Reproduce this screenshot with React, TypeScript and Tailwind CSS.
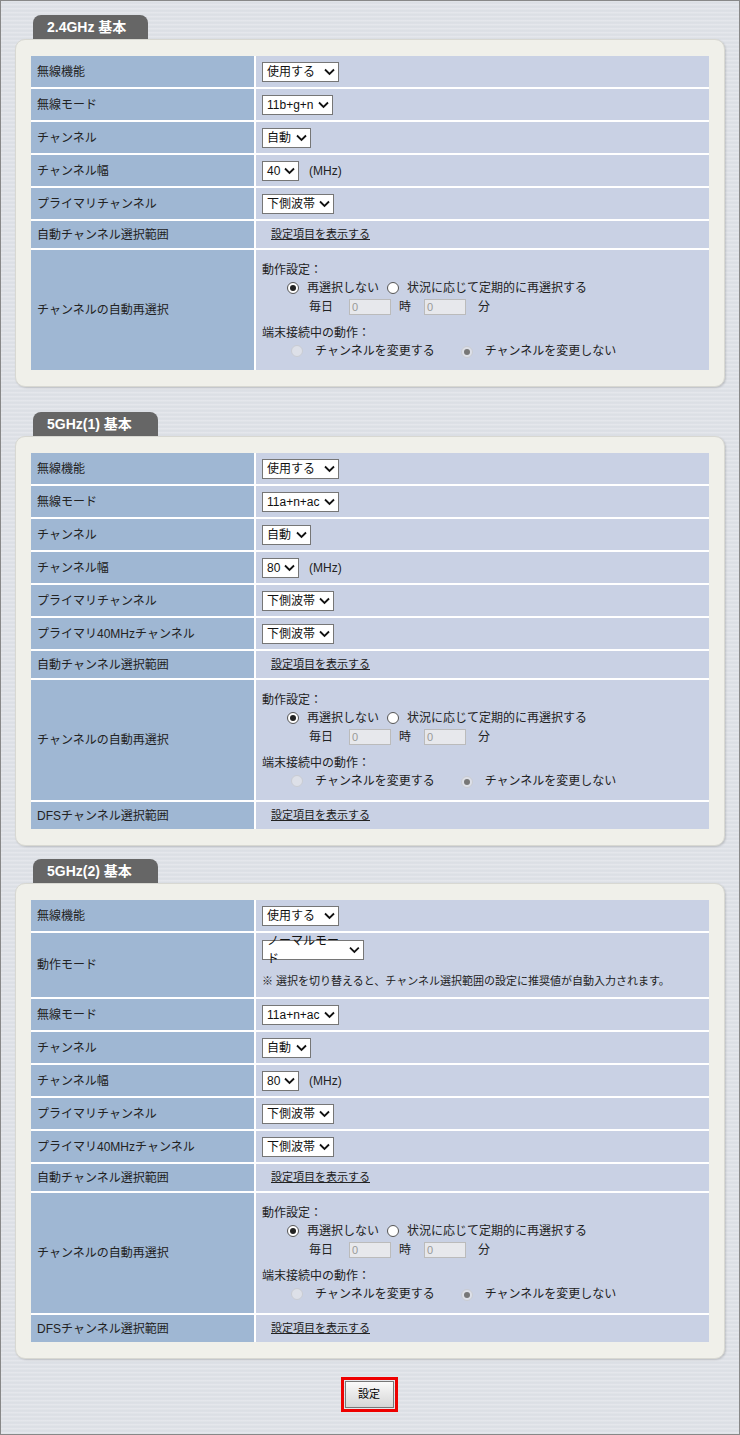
import React from "react";

const F = { fontFamily: '"Liberation Sans","Noto Sans CJK JP",sans-serif' };

function Sel({ v, w }: { v: string; w: number }) {
  return (
    <div className="inline-flex items-center justify-between h-[20px] bg-white border border-[#767676] pl-[4px] pr-[3px] text-[12px] text-[#111]" style={{ width: w }}>
      <span>{v}</span>
      <svg width="11" height="8" viewBox="0 0 11 8"><path d="M1 1.5 L5.5 6 L10 1.5" stroke="#111" strokeWidth="1.8" fill="none" /></svg>
    </div>
  );
}

function Radio({ on, dis }: { on?: boolean; dis?: boolean }) {
  return (
    <span className={`inline-flex items-center justify-center w-[12px] h-[12px] rounded-full border ${dis ? "border-[#c9ccd3] bg-[#dde0e8]" : "border-[#555] bg-white"}`}>
      {on && <span className={`w-[6px] h-[6px] rounded-full ${dis ? "bg-[#777]" : "bg-[#222]"}`} />}
    </span>
  );
}

function Row({ label, h = 31, children }: { label: string; h?: number; children: React.ReactNode }) {
  return (
    <div className="grid grid-cols-[223px_1fr] gap-[2px]" style={{ minHeight: h }}>
      <div className="bg-[#9fb7d3] flex items-center pl-[6px] text-[12px] text-[#222]">{label}</div>
      <div className="bg-[#c9d1e4] flex items-center pl-[6px] text-[12px] text-[#222]">{children}</div>
    </div>
  );
}

const Link = () => <span className="underline ml-[9px] text-[11px]">設定項目を表示する</span>;

function Reselect() {
  return (
    <Row label="チャンネルの自動再選択" h={120}>
      <div className="flex flex-col py-[5px] leading-[18px] text-[12px]">
        <div>動作設定：</div>
        <div className="flex items-center gap-[8px] pl-[25px]">
          <Radio on /> <span>再選択しない</span>
          <Radio /> <span>状況に応じて定期的に再選択する</span>
        </div>
        <div className="flex items-center pl-[47px] h-[20px]">
          <span>毎日</span>
          <div className="ml-[16px] w-[42px] h-[16px] border border-[#bbb] bg-[#e7e8ec] text-[#999] text-[11px] leading-[14px] pl-[2px]">0</div>
          <span className="ml-[8px]">時</span>
          <div className="ml-[13px] w-[42px] h-[16px] border border-[#bbb] bg-[#e7e8ec] text-[#999] text-[11px] leading-[14px] pl-[2px]">0</div>
          <span className="ml-[12px]">分</span>
        </div>
        <div className="mt-[7px]">端末接続中の動作：</div>
        <div className="flex items-center pl-[29px]">
          <Radio dis /> <span className="ml-[12px]">チャンネルを変更する</span>
          <span className="ml-[26px]"><Radio dis on /></span> <span className="ml-[12px]">チャンネルを変更しない</span>
        </div>
      </div>
    </Row>
  );
}

function Section({ title, tabW, children }: { title: string; tabW: number; children: React.ReactNode }) {
  return (
    <div className="mt-[13px]">
      <div className="ml-[18px] h-[24px] bg-[#666] rounded-t-[8px] text-white font-bold text-[14px] flex items-center pl-[14px]" style={{ width: tabW }}>{title}</div>
      <div className="bg-[#f0f0ea] rounded-[10px] border border-[#d8d8d2] px-[15px] py-[16px] shadow-[1px_1px_2px_rgba(0,0,0,0.15)]">
        <div className="flex flex-col gap-[2px] bg-white">{children}</div>
      </div>
    </div>
  );
}

const MHz = (v: string) => (<><Sel v={v} w={37} /><span className="ml-[10px]">(MHz)</span></>);

export default function App() {
  return (
    <div style={F} className="w-[740px] h-[1435px] border border-[#888] bg-[repeating-linear-gradient(180deg,#e2e5ea_0px,#d9dde3_2px,#e8eaee_4px)] px-[14px] pt-[1px]">
      <Section title="2.4GHz 基本" tabW={115}>
        <Row label="無線機能"><Sel v="使用する" w={77} /></Row>
        <Row label="無線モード"><Sel v="11b+g+n" w={71} /></Row>
        <Row label="チャンネル"><Sel v="自動" w={49} /></Row>
        <Row label="チャンネル幅">{MHz("40")}</Row>
        <Row label="プライマリチャンネル"><Sel v="下側波帯" w={72} /></Row>
        <Row label="自動チャンネル選択範囲" h={27}><Link /></Row>
        <Reselect />
      </Section>
      <div className="h-[12px]" />
      <Section title="5GHz(1) 基本" tabW={125}>
        <Row label="無線機能"><Sel v="使用する" w={77} /></Row>
        <Row label="無線モード"><Sel v="11a+n+ac" w={77} /></Row>
        <Row label="チャンネル"><Sel v="自動" w={49} /></Row>
        <Row label="チャンネル幅">{MHz("80")}</Row>
        <Row label="プライマリチャンネル"><Sel v="下側波帯" w={72} /></Row>
        <Row label="プライマリ40MHzチャンネル"><Sel v="下側波帯" w={72} /></Row>
        <Row label="自動チャンネル選択範囲" h={27}><Link /></Row>
        <Reselect />
        <Row label="DFSチャンネル選択範囲" h={27}><Link /></Row>
      </Section>
      <Section title="5GHz(2) 基本" tabW={125}>
        <Row label="無線機能"><Sel v="使用する" w={77} /></Row>
        <Row label="動作モード" h={64}>
          <div className="flex flex-col gap-[13px]">
            <Sel v="ノーマルモード" w={102} />
            <span className="text-[11px]">※ 選択を切り替えると、チャンネル選択範囲の設定に推奨値が自動入力されます。</span>
          </div>
        </Row>
        <Row label="無線モード"><Sel v="11a+n+ac" w={77} /></Row>
        <Row label="チャンネル"><Sel v="自動" w={49} /></Row>
        <Row label="チャンネル幅">{MHz("80")}</Row>
        <Row label="プライマリチャンネル"><Sel v="下側波帯" w={72} /></Row>
        <Row label="プライマリ40MHzチャンネル"><Sel v="下側波帯" w={72} /></Row>
        <Row label="自動チャンネル選択範囲" h={27}><Link /></Row>
        <Reselect />
        <Row label="DFSチャンネル選択範囲" h={27}><Link /></Row>
      </Section>
      <div className="flex justify-center mt-[18px] pr-[1px]">
        <div className="border-[3px] border-[#e00] p-[1px] ml-[-1px]">
          <div className="w-[49px] h-[27px] bg-gradient-to-b from-[#fafafa] to-[#d6d6d6] border border-[#777] text-[11px] flex items-center justify-center">設定</div>
        </div>
      </div>
    </div>
  );
}
